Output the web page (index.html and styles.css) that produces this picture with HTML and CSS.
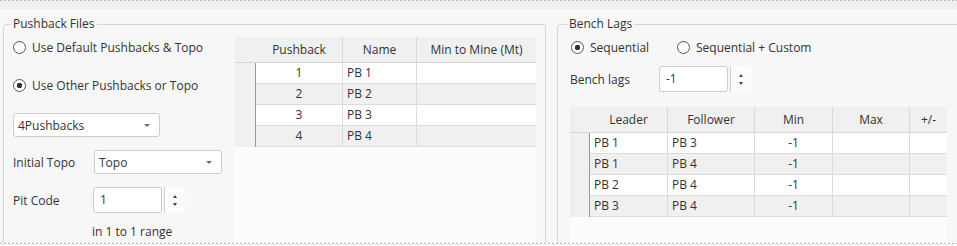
FILE: index.html
```html
<!DOCTYPE html>
<html>
    <head>
        <meta charset="UTF-8">
        <title>Pushbacks and Bench Lags</title>
        <link rel="stylesheet" href="styles.css">
    </head>
    <body>
        <div class="pit-toolbar"></div>
        <div class="pit-panels">
            <fieldset class="pit-group pit-group-pushbacks">
                <legend>Pushback Files</legend>
                <div class="pit-group-body">
                    <div class="pit-controls">
                        <label class="pit-radio">
                            <input type="radio" name="source">
                            Use Default Pushbacks &amp; Topo
                        </label>
                        <label class="pit-radio pit-radio-other">
                            <input type="radio" name="source" checked>
                            Use Other Pushbacks or Topo
                        </label>
                        <div class="pit-select pit-select-pushbacks">
                            4Pushbacks
                            <span class="pit-caret"></span>
                        </div>
                        <div class="pit-field">
                            <span class="pit-field-label">Initial Topo</span>
                            <div class="pit-select pit-select-topo">
                                Topo
                                <span class="pit-caret"></span>
                            </div>
                        </div>
                        <div class="pit-field">
                            <span class="pit-field-label">Pit Code</span>
                            <div class="pit-spin">
                                <div class="pit-spin-box">1</div>
                                <div class="pit-spin-buttons">
                                    <span class="pit-arrow-up"></span>
                                    <span class="pit-arrow-down"></span>
                                </div>
                            </div>
                        </div>
                        <div class="pit-range">in 1 to 1 range</div>
                    </div>
                    <div class="pit-grid pit-grid-pushbacks">
                        <table>
                            <colgroup>
                                <col class="pit-col-rowhead">
                                <col class="pit-col-pushback">
                                <col class="pit-col-name">
                                <col class="pit-col-mine">
                            </colgroup>
                            <tr>
                                <th class="pit-rowhead"></th>
                                <th>Pushback</th>
                                <th>Name</th>
                                <th>Min to Mine (Mt)</th>
                            </tr>
                            <tr>
                                <td class="pit-rowhead"></td>
                                <td class="pit-center">1</td>
                                <td>PB 1</td>
                                <td></td>
                            </tr>
                            <tr>
                                <td class="pit-rowhead"></td>
                                <td class="pit-center">2</td>
                                <td>PB 2</td>
                                <td></td>
                            </tr>
                            <tr>
                                <td class="pit-rowhead"></td>
                                <td class="pit-center">3</td>
                                <td>PB 3</td>
                                <td></td>
                            </tr>
                            <tr>
                                <td class="pit-rowhead"></td>
                                <td class="pit-center">4</td>
                                <td>PB 4</td>
                                <td></td>
                            </tr>
                        </table>
                    </div>
                </div>
            </fieldset>

            <fieldset class="pit-group pit-group-lags">
                <legend>Bench Lags</legend>
                <div class="pit-group-body">
                    <div class="pit-radio-row">
                        <label class="pit-radio pit-radio-sequential">
                            <input type="radio" name="lags" checked>
                            Sequential
                        </label>
                        <label class="pit-radio">
                            <input type="radio" name="lags">
                            Sequential + Custom
                        </label>
                    </div>
                    <div class="pit-field pit-field-lags">
                        <span class="pit-field-label">Bench lags</span>
                        <div class="pit-spin">
                            <div class="pit-spin-box">-1</div>
                            <div class="pit-spin-buttons">
                                <span class="pit-arrow-up"></span>
                                <span class="pit-arrow-down"></span>
                            </div>
                        </div>
                    </div>
                    <div class="pit-grid pit-grid-lags">
                        <table>
                            <colgroup>
                                <col class="pit-col-rowhead-lags">
                                <col class="pit-col-leader">
                                <col class="pit-col-follower">
                                <col class="pit-col-min">
                                <col class="pit-col-max">
                                <col class="pit-col-plus">
                            </colgroup>
                            <tr>
                                <th class="pit-rowhead"></th>
                                <th>Leader</th>
                                <th>Follower</th>
                                <th>Min</th>
                                <th>Max</th>
                                <th>+/-</th>
                            </tr>
                            <tr>
                                <td class="pit-rowhead"></td>
                                <td>PB 1</td>
                                <td>PB 3</td>
                                <td class="pit-center">-1</td>
                                <td></td>
                                <td></td>
                            </tr>
                            <tr>
                                <td class="pit-rowhead"></td>
                                <td>PB 1</td>
                                <td>PB 4</td>
                                <td class="pit-center">-1</td>
                                <td></td>
                                <td></td>
                            </tr>
                            <tr>
                                <td class="pit-rowhead"></td>
                                <td>PB 2</td>
                                <td>PB 4</td>
                                <td class="pit-center">-1</td>
                                <td></td>
                                <td></td>
                            </tr>
                            <tr>
                                <td class="pit-rowhead"></td>
                                <td>PB 3</td>
                                <td>PB 4</td>
                                <td class="pit-center">-1</td>
                                <td></td>
                                <td></td>
                            </tr>
                        </table>
                    </div>
                </div>
            </fieldset>
        </div>
        <div class="pit-footer"></div>
    </body>
</html>
```

FILE: styles.css
```css
* {
    box-sizing: border-box;
    margin: 0;
    padding: 0;
}

html, body {
    width: 957px;
    height: 246px;
    overflow: hidden;
}

body {
    background-color: #f7f7f7;
    font-family: "Open Sans", "Liberation Sans", sans-serif;
    font-size: 12px;
    color: #333;
}

.pit-toolbar {
    height: 9px;
    background: repeating-linear-gradient(90deg, #b8b8b8 0 2px, transparent 2px 4px) top left / 100% 1px no-repeat, #efefef;
}

.pit-footer {
    height: 3px;
    background: repeating-linear-gradient(90deg, #b8b8b8 0 2px, transparent 2px 4px) top left / 100% 1px no-repeat;
}

.pit-panels {
    display: flex;
    gap: 11px;
    height: 234px;
    overflow: hidden;
    padding: 8px 0 0 3px;
}

.pit-group {
    flex: none;
    min-width: 0;
    height: 260px;
    border: 1px solid #d5d5d5;
    border-radius: 3px;
}

.pit-group legend {
    margin-left: 7px;
    padding: 0 2px;
    line-height: 14px;
}

.pit-group-pushbacks {
    width: 543px;
}

.pit-group-lags {
    width: 420px;
}

.pit-group-lags legend {
    margin-left: 9px;
}

.pit-group-pushbacks .pit-group-body {
    display: flex;
    padding: 6px 9px 0 9px;
}

.pit-group-lags .pit-group-body {
    padding: 6px 0 0 12px;
}

/* left column */
.pit-controls {
    display: flex;
    flex-direction: column;
    width: 222px;
    flex: none;
}

.pit-radio {
    display: flex;
    align-items: center;
    gap: 6px;
    height: 20px;
    white-space: nowrap;
}

.pit-radio input {
    appearance: none;
    width: 13px;
    height: 13px;
    border: 1px solid #555;
    border-radius: 50%;
    background-color: #fff;
    flex: none;
}

.pit-radio input:checked {
    background: radial-gradient(circle, #333 0 2.5px, #fff 3px);
}

.pit-radio-other {
    margin-top: 18px;
}

.pit-select {
    display: flex;
    align-items: center;
    justify-content: space-between;
    height: 24px;
    padding: 0 9px 0 4px;
    border: 1px solid #cdcdcd;
    border-radius: 3px;
    background-color: #fff;
}

.pit-select-pushbacks {
    width: 147px;
    margin-top: 18px;
}

.pit-select-topo {
    width: 128px;
    margin-left: 1px;
}

.pit-caret {
    width: 0;
    height: 0;
    border-left: 3px solid transparent;
    border-right: 3px solid transparent;
    border-top: 3px solid #707070;
}

.pit-field {
    display: flex;
    align-items: center;
    margin-top: 13px;
}

.pit-field-label {
    width: 80px;
    flex: none;
}

.pit-spin {
    display: flex;
}

.pit-spin-box {
    width: 69px;
    height: 26px;
    line-height: 24px;
    padding-left: 6px;
    border: 1px solid #cdcdcd;
    border-radius: 3px;
    background-color: #fff;
}

.pit-spin-buttons {
    display: flex;
    flex-direction: column;
    justify-content: space-around;
    align-items: center;
    width: 21px;
    height: 26px;
    margin-left: 2px;
    padding: 5px 0;
    border-left: 1px solid #d0d0d0;
    background-color: #fcfcfc;
}

.pit-arrow-up {
    border-left: 2px solid transparent;
    border-right: 2px solid transparent;
    border-bottom: 3px solid #444;
}

.pit-arrow-down {
    border-left: 2px solid transparent;
    border-right: 2px solid transparent;
    border-top: 3px solid #444;
}

.pit-range {
    margin: 12px 0 0 79px;
    line-height: 14px;
}

/* right column */
.pit-radio-row {
    display: flex;
    margin-left: 1px;
}

.pit-radio-sequential {
    width: 106px;
}

.pit-field-lags {
    margin-top: 9px;
}

.pit-field-lags .pit-field-label {
    width: 89px;
}

/* grids */
.pit-grid {
    flex: none;
    height: 220px;
    overflow: hidden;
    background-color: #fcfcfc;
}

.pit-grid-pushbacks {
    width: 301px;
}

.pit-grid-lags {
    width: 377px;
    margin-top: 15px;
}

.pit-grid table {
    border-collapse: separate;
    border-spacing: 0;
    table-layout: fixed;
}

.pit-grid-pushbacks table {
    width: 301px;
}

.pit-grid-lags table {
    width: 377px;
}

.pit-col-rowhead { width: 21px; }
.pit-col-pushback { width: 87px; }
.pit-col-name { width: 74px; }
.pit-col-mine { width: 119px; }

.pit-col-rowhead-lags { width: 20px; }
.pit-col-leader { width: 78px; }
.pit-col-follower { width: 87px; }
.pit-col-min { width: 78px; }
.pit-col-max { width: 77px; }
.pit-col-plus { width: 37px; }

.pit-grid th {
    font-weight: normal;
    line-height: 25px;
    text-align: center;
    white-space: nowrap;
    background-color: #f0f0f0;
    border-right: 1px solid #d9d9d9;
    border-bottom: 1px solid #d5d5d5;
}

.pit-grid td {
    line-height: 20px;
    padding: 0 4px;
    white-space: nowrap;
    background-color: #fff;
    border-right: 1px solid #dcdcdc;
    border-bottom: 1px solid #dcdcdc;
}

.pit-grid tr:nth-child(odd) td {
    background-color: #f0f0f0;
}

.pit-grid th.pit-rowhead {
    border-right: none;
}

.pit-grid td.pit-rowhead {
    padding: 0;
    background-color: #f0f0f0;
    border-bottom: none;
    border-right: 1px solid #999;
}

.pit-grid th:last-child,
.pit-grid td:last-child {
    border-right: none;
}

.pit-center {
    text-align: center;
}
```
